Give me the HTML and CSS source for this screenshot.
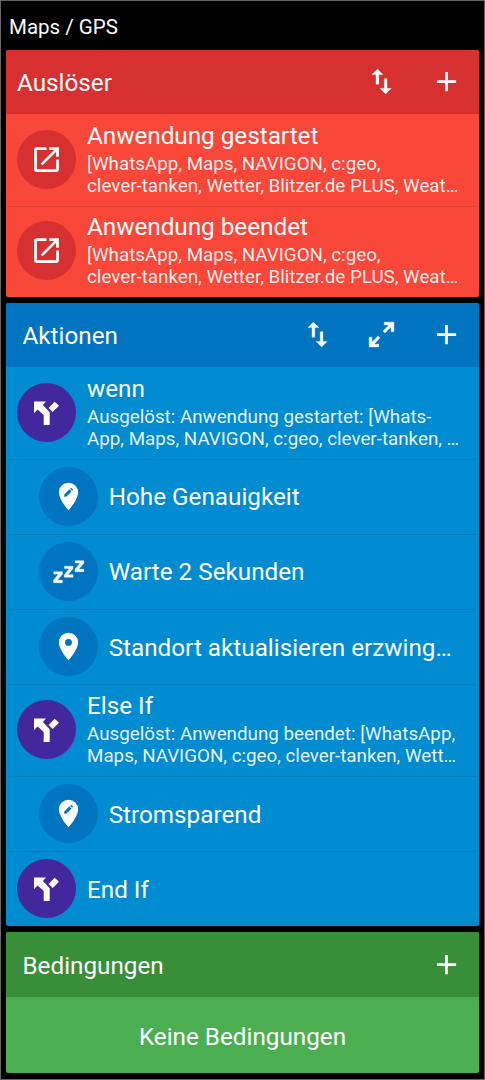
FILE: index.html
```html
<!DOCTYPE html>
<html lang="de">
<head>
<meta charset="utf-8">
<title>Maps / GPS</title>
<link rel="stylesheet" href="styles.css">
</head>
<body>
<svg class="sprite" aria-hidden="true">
  <symbol id="plus" viewBox="0 0 24 24"><path d="M19 13h-6v6h-2v-6H5v-2h6V5h2v6h6z"/></symbol>
  <symbol id="swap" viewBox="0 0 24 24"><path d="M16 17.01V10h-2v7.01h-3L15 21l4-3.99zM9 3 5 6.99h3V14h2V6.99h3z" stroke="currentColor" stroke-width=".25"/></symbol>
  <symbol id="expand" viewBox="0 0 24 24"><path d="M10 21v-2H6.41l4.5-4.5-1.41-1.41-4.5 4.5V14H3v7zM14.5 10.91l4.5-4.5V10h2V3h-7v2h3.59l-4.5 4.5z" stroke="currentColor" stroke-width=".3"/></symbol>
  <symbol id="open" viewBox="0 0 24 24"><path d="M19 19H5V5h7V3H5a2 2 0 0 0-2 2v14a2 2 0 0 0 2 2h14c1.1 0 2-.9 2-2v-7h-2zM14 3v2h3.59l-9.83 9.83 1.41 1.41L19 6.41V10h2V3z"/></symbol>
  <symbol id="split" viewBox="0 0 33 33"><path d="M4 5.500h12l-3.100 3.600 6.800 7.200V29h-6V19L7.600 13.500l-3.600 3.700zM24.700 5.700l4.300 4.100-6.300 6.300-4.100-4.200z"/></symbol>
  <symbol id="pin" viewBox="0 0 24 24"><path fill-rule="evenodd" d="M12 2a7 7 0 0 0-7 7c0 5.250 7 13 7 13s7-7.750 7-13a7 7 0 0 0-7-7zm0 9.500a2.500 2.500 0 1 1 0-5 2.500 2.500 0 0 1 0 5z"/></symbol>
  <symbol id="pinedit" viewBox="0 0 24 24"><path fill-rule="evenodd" d="M12 2a7 7 0 0 0-7 7c0 5.250 7 13 7 13s7-7.750 7-13a7 7 0 0 0-7-7zM8.900 10.600l3.800-3.800 1.500 1.500-3.800 3.800H8.900zM13.200 6.400l.8-.7 1.400 1.400-.7.700z"/></symbol>
  <symbol id="zzz" viewBox="0 0 33 33"><path transform="translate(.3 -1)" stroke="currentColor" stroke-width=".4" d="M1.500 17.700h8.600v2.500L5 26.300h5.100v2.400H1.200v-2.500l5.100-6.100H1.500zM12.200 12.200h8.500v2.500l-5.100 6.100h5.200v2.400H12v-2.500l5.100-6.100h-4.900zM23 6.700h8.500v2.500l-5.100 6.100h5.200v2.400h-8.900v-2.500l5.100-6.100H23z"/></symbol>
</svg>
<main class="screen">
  <h1 class="macro-name"><span>Maps / GPS</span></h1>

  <section class="card triggers">
    <header class="bar">
      <h2>Auslöser</h2>
      <svg class="icon"><use href="#swap"/></svg>
      <svg class="icon"><use href="#plus"/></svg>
    </header>
    <div class="row detail">
      <div class="badge"><svg class="icon"><use href="#open"/></svg></div>
      <div class="text"><h3>Anwendung gestartet</h3><p>[WhatsApp, Maps, NAVIGON, c:geo,<br>clever-tanken, Wetter, Blitzer.de PLUS, Weat…</p></div>
    </div>
    <div class="row detail">
      <div class="badge"><svg class="icon"><use href="#open"/></svg></div>
      <div class="text"><h3>Anwendung beendet</h3><p>[WhatsApp, Maps, NAVIGON, c:geo,<br>clever-tanken, Wetter, Blitzer.de PLUS, Weat…</p></div>
    </div>
  </section>

  <section class="card actions">
    <header class="bar">
      <h2>Aktionen</h2>
      <svg class="icon"><use href="#swap"/></svg>
      <svg class="icon"><use href="#expand"/></svg>
      <svg class="icon"><use href="#plus"/></svg>
    </header>
    <div class="row detail">
      <div class="badge logic"><svg class="icon"><use href="#split"/></svg></div>
      <div class="text"><h3>wenn</h3><p>Ausgelöst: Anwendung gestartet: [Whats-<br>App, Maps, NAVIGON, c:geo, clever-tanken, …</p></div>
    </div>
    <div class="row nested">
      <div class="badge"><svg class="icon"><use href="#pinedit"/></svg></div>
      <div class="text"><h3>Hohe Genauigkeit</h3></div>
    </div>
    <div class="row nested">
      <div class="badge"><svg class="icon"><use href="#zzz"/></svg></div>
      <div class="text"><h3>Warte 2 Sekunden</h3></div>
    </div>
    <div class="row nested">
      <div class="badge"><svg class="icon"><use href="#pin"/></svg></div>
      <div class="text"><h3>Standort aktualisieren erzwing…</h3></div>
    </div>
    <div class="row detail">
      <div class="badge logic"><svg class="icon"><use href="#split"/></svg></div>
      <div class="text"><h3>Else If</h3><p>Ausgelöst: Anwendung beendet: [WhatsApp,<br>Maps, NAVIGON, c:geo, clever-tanken, Wett…</p></div>
    </div>
    <div class="row nested">
      <div class="badge"><svg class="icon"><use href="#pinedit"/></svg></div>
      <div class="text"><h3>Stromsparend</h3></div>
    </div>
    <div class="row">
      <div class="badge logic"><svg class="icon"><use href="#split"/></svg></div>
      <div class="text"><h3>End If</h3></div>
    </div>
  </section>

  <section class="card constraints">
    <header class="bar">
      <h2>Bedingungen</h2>
      <svg class="icon"><use href="#plus"/></svg>
    </header>
    <div class="empty">Keine Bedingungen</div>
  </section>
</main>
</body>
</html>
```
FILE: styles.css
```css
* { box-sizing: border-box; }
body { margin: 0; background: #000; font-family: Roboto, sans-serif; color: #fff; }
h1, h2, h3, p { margin: 0; font-weight: 400; white-space: nowrap; }
.sprite { display: none; }
.screen {
  height: 1080px;
  padding: 0 5px;
  border: 1px solid #666;
  display: flex;
  flex-direction: column;
  gap: 6px;
}
.macro-name { height: 43px; padding: 14px 0 0 3px; font-size: 20.5px; line-height: 24px; }
.card { border-radius: 2px; overflow: hidden; flex: none; }
.bar {
  height: 64px;
  display: flex;
  align-items: center;
  gap: 31.500px;
  padding: 0 16.500px 1px 16.500px;
}
.bar h2 { flex: 1; font-size: 24.250px; line-height: 28px; padding-top: 3px; }
.icon { width: 33px; height: 33px; fill: currentColor; flex: none; display: block; }
.row {
  height: 75.300px;
  padding: 0 18px 0 11px;
  display: flex;
  align-items: center;
  gap: 11px;
  position: relative;
}
.row.detail { height: 91.500px; padding-bottom: 1px; }
.row.nested { padding-left: 32.700px; }
.row + .row::before {
  content: "";
  position: absolute;
  top: 0;
  left: 3px;
  right: 3px;
  height: 1px;
  background: rgba(0, 0, 0, .09);
}
.badge {
  width: 59px;
  height: 59px;
  border-radius: 50%;
  display: grid;
  place-items: center;
  flex: none;
}
.text h3 { font-size: 24.250px; line-height: 28px; padding-top: 2px; }
.detail .text h3 { padding: 0 0 3px; }
.text p { font-size: 18.780px; line-height: 22px; color: rgba(255, 255, 255, .92); }
.triggers { background: #f9473a; height: 247px; }
.triggers .bar { background: #d63030; padding-left: 11px; }
.triggers .badge { background: #d63030; }
.actions { background: #018bd0; height: 623px; }
.actions .bar, .actions .badge { background: #0074be; }
.actions .badge.logic { background: #43279d; }
.constraints { background: #4baf52; height: 141px; }
.constraints .bar { background: #398e39; height: 65px; padding-bottom: 0; }
.empty { height: 76px; display: grid; place-items: center; font-size: 24.250px; line-height: 28px; padding-top: 3px; }
```
